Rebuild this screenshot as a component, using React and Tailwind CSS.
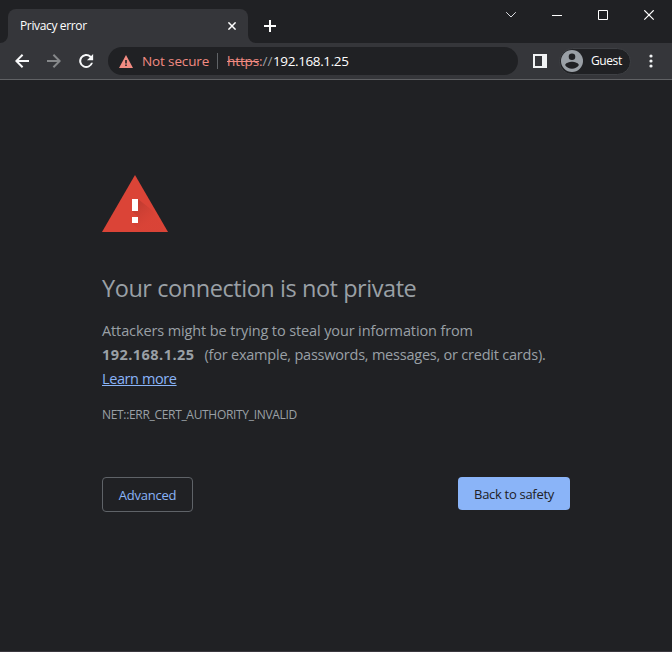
import React from "react";

function TabStrip() {
  return (
    <div className="flex h-[43px] items-end">
      <svg className="h-2 w-2 shrink-0" viewBox="0 0 8 8">
        <path d="M8 0v8H0a8 8 0 0 0 8-8z" fill="#35363a" />
      </svg>
      <div className="flex h-[34px] w-60 shrink-0 items-center justify-between rounded-t-lg bg-[#35363a] pl-3 pr-3">
        <span className="whitespace-nowrap text-[12px] leading-4 tracking-[-0.36px] text-white">Privacy error</span>
        <svg className="h-2 w-2" viewBox="0 0 8 8" stroke="#fff" strokeWidth="1.5">
          <path d="M.4.4l7.2 7.2M7.6.4L.4 7.6" />
        </svg>
      </div>
      <svg className="h-2 w-2 shrink-0" viewBox="0 0 8 8">
        <path d="M0 0v8h8a8 8 0 0 1-8-8z" fill="#35363a" />
      </svg>
      <svg className="mb-[11px] ml-2 h-3 w-3 shrink-0" viewBox="0 0 12 12" fill="#fff">
        <path d="M5 0h2v5h5v2H7v5H5V7H0V5h5z" />
      </svg>
      <div className="ml-auto flex h-full items-start pt-2.5 pr-[17px]">
        <svg className="h-[11px] w-[149px]" viewBox="0 0 149 11" fill="none" stroke="#fff">
          <path d="M.2 2.200l4.800 4.800 4.800-4.800" stroke="#dadce0" />
          <path d="M46 5.500h10" />
          <path d="M92.500.5h9v9h-9z" />
          <path d="M138.300.3l9.400 9.400M147.700.3l-9.400 9.400" strokeWidth="1.2" />
        </svg>
      </div>
    </div>
  );
}

function Toolbar() {
  return (
    <div className="flex h-[37px] items-center border-b border-[#606164] bg-[#35363a]">
      <svg className="ml-[15px] h-[14px] w-[14px] shrink-0" viewBox="0 0 14 14" fill="none" stroke="#f8f9fa" strokeWidth="2">
        <path d="M14 7H2M7.600.7L1.300 7l6.300 6.300" />
      </svg>
      <svg className="ml-[18px] h-[14px] w-[14px] shrink-0" viewBox="0 0 14 14" fill="none" stroke="#86888a" strokeWidth="2">
        <path d="M0 7h12M6.400.7L12.700 7l-6.300 6.300" />
      </svg>
      <svg className="ml-[15px] h-5 w-5 shrink-0" viewBox="0 0 21 21" fill="#f8f9fa">
        <path d="M15.900 5.200A7.350 7.350 0 1 0 17.800 12.300h-2a5.300 5.300 0 1 1-1.350-5.600L11.500 9.700H18V3.100z" />
      </svg>
      <div className="ml-3 flex h-7 w-[410px] shrink-0 items-center rounded-full bg-[#202124] pl-[11px] text-[14px] leading-5">
        <svg className="h-[13px] w-[14px] shrink-0" viewBox="0 0 14 13">
          <path d="M7 0l7 13H0z" fill="#f28b82" />
          <path d="M6.200 5h1.600v3.500H6.200zM6.200 9.500h1.600V11H6.200z" fill="#202124" />
        </svg>
        <span className="ml-[9px] w-[67px] whitespace-nowrap text-[13.500px] tracking-[-0.13px] text-[#f28b82]">Not secure</span>
        <span className="ml-2 h-4 w-px bg-[#606367]" />
        <span className="ml-[9px] flex whitespace-nowrap text-[13.500px]">
          <span className="w-[46px] tracking-[-0.1px]">
            <span className="text-[#f28b82] line-through">https</span>
            <span className="text-[#f28b82]">:</span>
            <span className="text-[#9aa0a6]">//</span>
          </span>
          <span className="tracking-[-0.38px] text-white">192.168.1.25</span>
        </span>
      </div>
      <svg className="ml-[15px] h-[14px] w-[14px] shrink-0" viewBox="0 0 14 14">
        <path fillRule="evenodd" d="M0 0h14v14H0zM2 2v10h7V2z" fill="#f1f3f4" />
      </svg>
      <div className="ml-3 flex h-[27px] w-[72px] shrink-0 items-center rounded-full border border-[#3e4044] bg-[#202124] pl-px">
        <svg className="h-[22px] w-[22px] shrink-0" viewBox="0 0 22 22">
          <circle cx="11" cy="11" r="11" fill="#9aa0a6" />
          <circle cx="11" cy="6.700" r="3.300" fill="#202124" />
          <path d="M4.200 15.200c0-2.200 4.500-3.400 6.800-3.400s6.800 1.200 6.800 3.400c-1.500 2.200-4 3.600-6.800 3.600s-5.300-1.400-6.800-3.600z" fill="#202124" />
        </svg>
        <span className="ml-[8px] whitespace-nowrap text-[12px] leading-4 tracking-[-0.4px] text-white">Guest</span>
      </div>
      <svg className="ml-[17.500px] h-[14px] w-1 shrink-0" viewBox="0 0 4 14" fill="#f1f3f4">
        <circle cx="2" cy="2" r="1.600" />
        <circle cx="2" cy="7" r="1.600" />
        <circle cx="2" cy="12" r="1.600" />
      </svg>
    </div>
  );
}

function WarningIcon() {
  return (
    <svg className="h-[57px] w-[66px]" viewBox="0 0 66 57">
      <defs>
        <linearGradient id="shade" gradientUnits="userSpaceOnUse" x1="34" y1="30" x2="48" y2="46">
          <stop offset="0" stopColor="#ad352b" stopOpacity=".55" />
          <stop offset="1" stopColor="#c93e33" stopOpacity=".1" />
        </linearGradient>
      </defs>
      <path d="M33 0l33 57H0z" fill="#db4437" />
      <path d="M36 24l15 12 12 21H39l-9-9 6-6-6-6z" fill="url(#shade)" />
      <path d="M30 24h6v12h-6zM30 42h6v6h-6z" fill="#fff" />
    </svg>
  );
}

export default function App() {
  return (
    <div className="flex h-[652px] w-[672px] flex-col overflow-hidden border-b border-[#3a373e] bg-[#202124] font-['Open_Sans','Noto_Sans',sans-serif]">
      <TabStrip />
      <Toolbar />
      <main className="ml-[102px] w-[468px] pt-[95px] text-[#9aa0a6]">
        <WarningIcon />
        <h1 className="mt-10 whitespace-nowrap text-[23.500px] font-normal leading-8 tracking-[-0.44px]">Your connection is not private</h1>
        <div className="mt-[15px] whitespace-nowrap text-[14.500px] leading-6">
          <p className="tracking-[-0.12px]">Attackers might be trying to steal your information from</p>
          <p className="flex">
            <strong className="w-[102.500px] font-bold tracking-[0.46px]">192.168.1.25</strong>
            <span className="tracking-[-0.22px]">(for example, passwords, messages, or credit cards).</span>
          </p>
          <a className="tracking-[-0.4px] text-[#8ab4f8] underline">Learn more</a>
        </div>
        <p className="mt-[15px] whitespace-nowrap text-[12px] leading-[18px] tracking-[-0.32px]">NET::ERR_CERT_AUTHORITY_INVALID</p>
        <div className="mt-[53px] flex items-start justify-between text-[13px]">
          <button className="h-[35px] w-[91px] whitespace-nowrap rounded border border-[#5f6368] pt-0.5 tracking-[-0.25px] text-[#8ab4f8]">Advanced</button>
          <button className="h-[33px] w-28 whitespace-nowrap rounded bg-[#8ab4f8] pt-0.5 tracking-[-0.3px] text-[#202124]">Back to safety</button>
        </div>
      </main>
    </div>
  );
}
